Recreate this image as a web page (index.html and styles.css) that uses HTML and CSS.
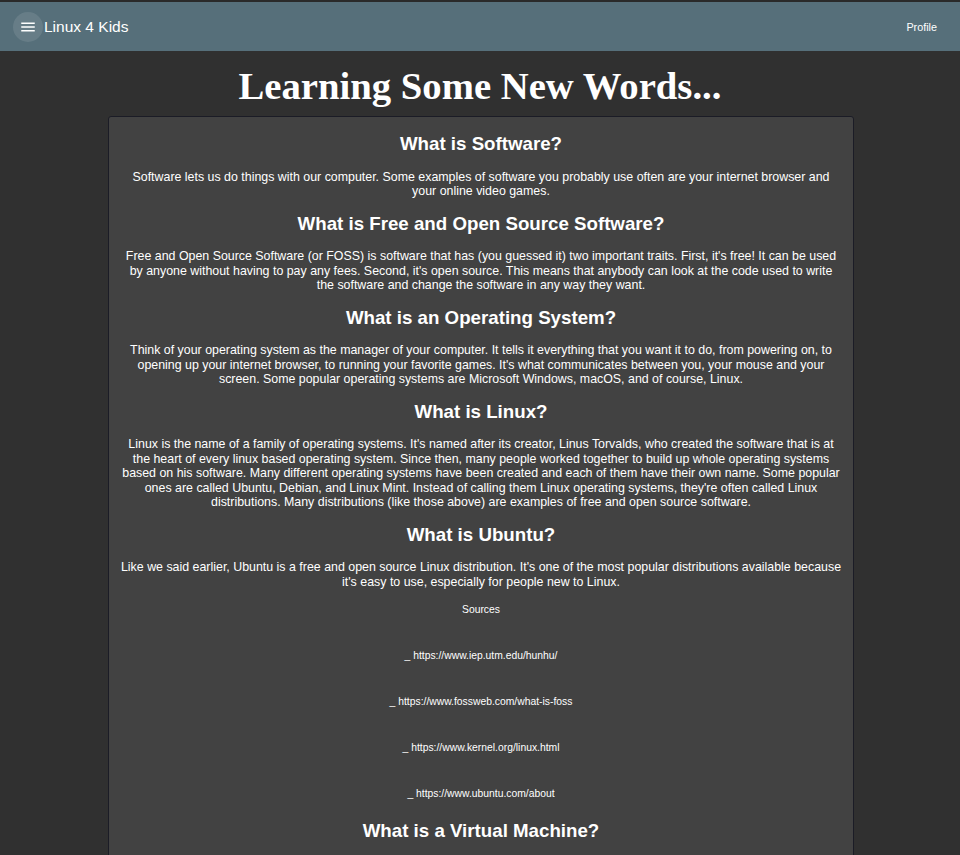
FILE: index.html
```html
<!DOCTYPE html>
<html lang="en">
<head>
<meta charset="utf-8">
<title>Linux 4 Kids</title>
<link rel="stylesheet" href="styles.css">
</head>
<body>
<header class="toolbar">
  <button class="menu-btn" aria-label="Menu">
    <svg viewBox="0 0 24 24" width="18" height="18"><path fill="#fff" d="M3 18h18v-2H3v2zm0-5h18v-2H3v2zm0-7v2h18V6H3z"/></svg>
  </button>
  <span class="brand">Linux 4 Kids</span>
  <span class="spacer"></span>
  <a class="profile" href="#">Profile</a>
</header>

<main class="page">
  <h1 class="title">Learning Some New Words...</h1>
  <section class="card">
    <h3 class="q">What is Software?</h3>
    <p class="a">Software lets us do things with our computer. Some examples of software you probably use often are your internet browser and your online video games.</p>

    <h3 class="q">What is Free and Open Source Software?</h3>
    <p class="a">Free and Open Source Software (or FOSS) is software that has (you guessed it) two important traits. First, it's free! It can be used by anyone without having to pay any fees. Second, it's open source. This means that anybody can look at the code used to write the software and change the software in any way they want.</p>

    <h3 class="q">What is an Operating System?</h3>
    <p class="a">Think of your operating system as the manager of your computer. It tells it everything that you want it to do, from powering on, to opening up your internet browser, to running your favorite games. It's what communicates between you, your mouse and your screen. Some popular operating systems are Microsoft Windows, macOS, and of course, Linux.</p>

    <h3 class="q">What is Linux?</h3>
    <p class="a">Linux is the name of a family of operating systems. It's named after its creator, Linus Torvalds, who created the software that is at the heart of every linux based operating system. Since then, many people worked together to build up whole operating systems based on his software. Many different operating systems have been created and each of them have their own name. Some popular ones are called Ubuntu, Debian, and Linux Mint. Instead of calling them Linux operating systems, they're often called Linux distributions. Many distributions (like those above) are examples of free and open source software.</p>

    <h3 class="q">What is Ubuntu?</h3>
    <p class="a">Like we said earlier, Ubuntu is a free and open source Linux distribution. It's one of the most popular distributions available because it's easy to use, especially for people new to Linux.</p>

    <div class="sources">
      <p class="sources-title">Sources</p>
      <p class="src">_ <a href="#">https://www.iep.utm.edu/hunhu/</a></p>
      <p class="src">_ <a href="#">https://www.fossweb.com/what-is-foss</a></p>
      <p class="src">_ <a href="#">https://www.kernel.org/linux.html</a></p>
      <p class="src">_ <a href="#">https://www.ubuntu.com/about</a></p>
    </div>

    <h3 class="q q-after">What is a Virtual Machine?</h3>
    <p class="a">A virtual machine is a computer that runs inside of another computer. It lets you try out a different operating system without changing the one you already have.</p>
  </section>
</main>
</body>
</html>
```

FILE: styles.css
```css
html, body {
  margin: 0;
  padding: 0;
}

body {
  background: #303030;
  color: #fff;
  font-family: "Liberation Sans", Arial, sans-serif;
}

.toolbar {
  border-top: 2px solid #2a2a2a;
  height: 49px;
  background: #566f7a;
  display: flex;
  align-items: center;
  padding: 0 23px 0 13px;
}

.menu-btn {
  width: 30px;
  height: 30px;
  border-radius: 50%;
  border: none;
  padding: 0;
  margin: 0 1px 0 0;
  background: rgba(255, 255, 255, 0.1);
  display: flex;
  align-items: center;
  justify-content: center;
}

.menu-btn svg {
  display: block;
}

.brand {
  font-size: 15.5px;
  color: #fff;
}

.spacer {
  flex: 1;
}

.profile {
  font-size: 10.8px;
  color: #fff;
  text-decoration: none;
}

.page {
  display: flex;
  flex-direction: column;
  align-items: center;
}

.title {
  font-family: "Liberation Serif", "Times New Roman", serif;
  font-weight: bold;
  font-size: 38.7px;
  line-height: 44px;
  margin: 13px 0 8px;
  text-align: center;
}

.card {
  box-sizing: border-box;
  width: 746px;
  margin-left: 2px;
  background: #424242;
  border: 1px solid #1b1c26;
  border-radius: 3px;
  padding: 0 11px 40px;
  text-align: center;
}

.q {
  font-size: 18.72px;
  line-height: 22px;
  font-weight: bold;
  margin: 14px 0 14.5px;
}

.card .q:first-child {
  margin-top: 16px;
}

.a {
  font-size: 12.4px;
  line-height: 14.5px;
  margin: 0;
}

.sources {
  font-size: 10.35px;
  line-height: 12px;
}

.sources p {
  margin: 0;
}

.sources-title {
  padding-top: 15px;
}

.sources .src {
  margin-top: 34px;
}

.src a {
  color: #fff;
  text-decoration: none;
}

.q-after {
  margin-top: 20px;
}
```
